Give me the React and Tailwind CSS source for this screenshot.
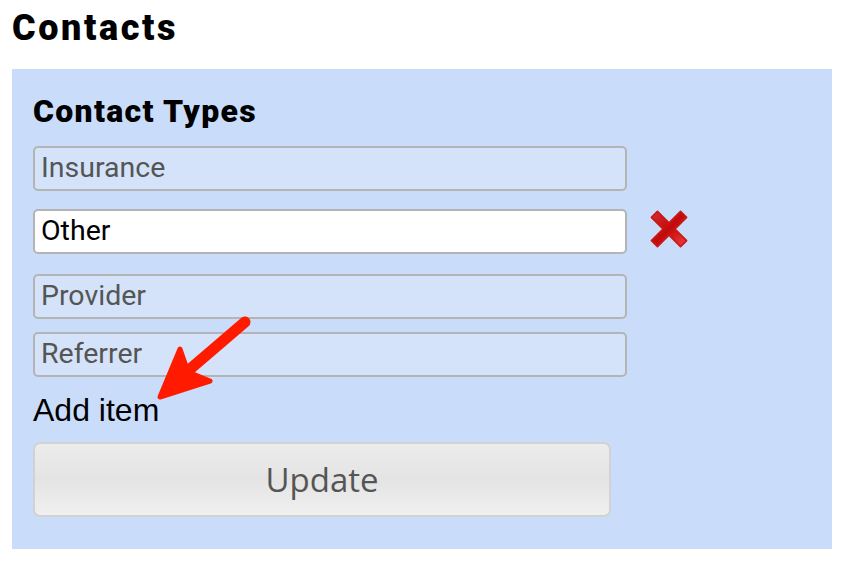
import { useState } from 'react';

const items = ['Insurance', 'Other', 'Provider', 'Referrer'];

const App = () => {
    const [active] = useState('Other');

    return (
        <div className="w-[868px] h-[574px] bg-white relative" style={{ fontFamily: 'Roboto, "Liberation Sans", sans-serif' }}>
            <h1 className="text-[36px] leading-none font-black tracking-[2.6px] text-black pl-[12px] pt-[10px] h-[69px]">Contacts</h1>

            <div className="mx-3 w-[820px] h-[480px] bg-[#c9ddfb] pl-[21px] pt-[26px]">
                <h2 className="text-[32px] leading-none font-black tracking-[1.3px] text-black mb-[19px]">Contact Types</h2>

                <div className="flex flex-col">
                    {items.map((item, i) => (
                        <div key={item} className={`flex items-center ${i === 0 ? 'mb-[18px]' : i === 1 ? 'mb-[20px]' : 'mb-[13px]'}`}>
                            <div
                                className={`w-[594px] h-[45px] rounded-[5px] border-2 border-[#b4b4b4] px-[6px] flex items-center text-[28.5px] ${
                                    item === active ? 'bg-white text-black' : 'bg-[#d4e3f9] text-[#555555]'
                                }`}
                            >
                                {item}
                            </div>
                            {item === active && (
                                <svg width="44" height="44" viewBox="0 0 40 40" className="ml-[20px] -mt-[6px]">
                                    <defs>
                                        <linearGradient id="xg" x1="0" y1="0" x2="1" y2="1">
                                            <stop offset="0" stopColor="#d53030" />
                                            <stop offset="0.5" stopColor="#c20a0a" />
                                            <stop offset="1" stopColor="#f24040" />
                                        </linearGradient>
                                    </defs>
                                    <path d="M4 9.5 L9.5 4 L20 14.5 L30.5 4 L36 9.5 L25.5 20 L36 30.5 L30.5 36 L20 25.5 L9.5 36 L4 30.5 L14.5 20 Z" fill="url(#xg)" strokeLinejoin="round" stroke="#c81818" strokeWidth="1.5" />
                                </svg>
                            )}
                        </div>
                    ))}
                </div>

                <div className="text-[32px] leading-none text-black mt-[4px] mb-[16px]" style={{ fontFamily: '"Liberation Sans", Arial, sans-serif' }}>Add item</div>

                <button
                    className="w-[578px] h-[75px] rounded-[7px] border-2 border-[#d2d2d2] bg-gradient-to-b from-[#ececec] via-[#e4e4e4] to-[#f0f0f0] text-[33px] text-[#555555]"
                    style={{ fontFamily: '"Open Sans", "Noto Sans", sans-serif' }}
                >
                    Update
                </button>
            </div>

            {/* annotation arrow */}
            <svg className="absolute left-0 top-0 pointer-events-none" width="868" height="574">
                <line x1="245" y1="322" x2="175" y2="382" stroke="#ff1a00" strokeWidth="11" strokeLinecap="round" />
                <path d="M160 397 L180 349 L188 372 L210 381 Z" fill="#ff1a00" stroke="#ff1a00" strokeWidth="5" strokeLinejoin="round" />
            </svg>
        </div>
    );
};

export default App;
